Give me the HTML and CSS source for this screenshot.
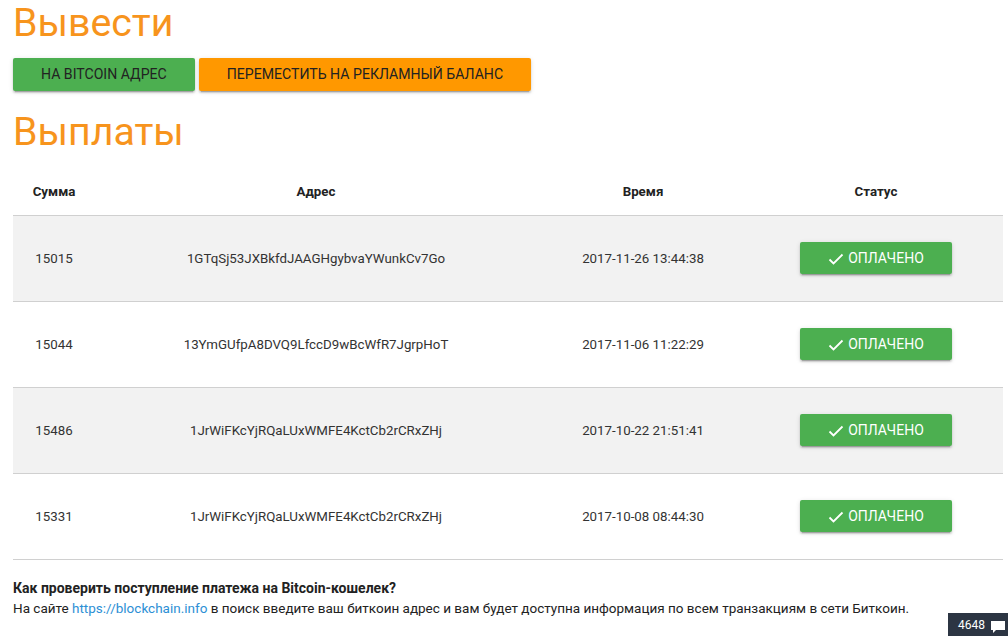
FILE: index.html
```html
<!DOCTYPE html>
<html lang="ru">
<head>
  <meta charset="UTF-8" />
  <meta name="viewport" content="width=device-width, initial-scale=1.0"/>
  <title>Вывести</title>
  <link rel="stylesheet" href="styles.css">
</head>
<body>
  <div class="wrapper">
    <h1 class="title">Вывести</h1>
    <div class="buttons">
      <a class="btn btn-green" href="#">На Bitcoin адрес</a>
      <a class="btn btn-orange" href="#">Переместить на рекламный баланс</a>
    </div>

    <h1 class="title title-payouts">Выплаты</h1>
    <table class="payouts">
      <colgroup>
        <col style="width: 82px">
        <col style="width: 442px">
        <col style="width: 212px">
        <col style="width: 254px">
      </colgroup>
      <thead>
        <tr>
          <th>Сумма</th>
          <th>Адрес</th>
          <th>Время</th>
          <th>Статус</th>
        </tr>
      </thead>
      <tbody>
        <tr>
          <td>15015</td>
          <td>1GTqSj53JXBkfdJAAGHgybvaYWunkCv7Go</td>
          <td>2017-11-26 13:44:38</td>
          <td><span class="status"><svg class="check" viewBox="0 0 16 12" width="16" height="12"><path d="M1.5 6.5l4 4 9-9" fill="none" stroke="#fff" stroke-width="1.8"/></svg>Оплачено</span></td>
        </tr>
        <tr>
          <td>15044</td>
          <td>13YmGUfpA8DVQ9LfccD9wBcWfR7JgrpHoT</td>
          <td>2017-11-06 11:22:29</td>
          <td><span class="status"><svg class="check" viewBox="0 0 16 12" width="16" height="12"><path d="M1.5 6.5l4 4 9-9" fill="none" stroke="#fff" stroke-width="1.8"/></svg>Оплачено</span></td>
        </tr>
        <tr>
          <td>15486</td>
          <td>1JrWiFKcYjRQaLUxWMFE4KctCb2rCRxZHj</td>
          <td>2017-10-22 21:51:41</td>
          <td><span class="status"><svg class="check" viewBox="0 0 16 12" width="16" height="12"><path d="M1.5 6.5l4 4 9-9" fill="none" stroke="#fff" stroke-width="1.8"/></svg>Оплачено</span></td>
        </tr>
        <tr>
          <td>15331</td>
          <td>1JrWiFKcYjRQaLUxWMFE4KctCb2rCRxZHj</td>
          <td>2017-10-08 08:44:30</td>
          <td><span class="status"><svg class="check" viewBox="0 0 16 12" width="16" height="12"><path d="M1.5 6.5l4 4 9-9" fill="none" stroke="#fff" stroke-width="1.8"/></svg>Оплачено</span></td>
        </tr>
      </tbody>
    </table>

    <div class="help">
      <p class="help-q">Как проверить поступление платежа на Bitcoin-кошелек?</p>
      <p>На сайте <a href="#">https://blockchain.info</a> в поиск введите ваш биткоин адрес и вам будет доступна информация по всем транзакциям в сети Биткоин.</p>
    </div>
  </div>

  <div class="chat-badge">4648
    <svg viewBox="0 0 16 14" width="16" height="14"><path d="M1 1h14v9H6l-3 3v-3H1z" fill="#fff"/></svg>
  </div>
</body>
</html>
```

FILE: styles.css
```css
* {
  margin: 0;
  padding: 0;
  box-sizing: border-box;
}

body {
  font-family: Roboto, "Liberation Sans", sans-serif;
  color: #333;
  background: #fff;
  overflow: hidden;
}

.wrapper {
  padding: 0 5px 0 13px;
}

.title {
  font-size: 39.3px;
  font-weight: 400;
  color: #f7941d;
  line-height: 46px;
}

.title-payouts {
  margin-top: 18px;
  margin-bottom: 14px;
}

.buttons {
  margin-top: 12px;
  display: flex;
  gap: 4px;
}

.btn {
  display: inline-block;
  height: 33px;
  line-height: 33px;
  padding: 0 28px;
  font-size: 14.1px;
  text-transform: uppercase;
  color: #222;
  text-decoration: none;
  border-radius: 2px;
  box-shadow: 0 2px 2px rgba(0, 0, 0, 0.14), 0 1px 5px rgba(0, 0, 0, 0.12), 0 3px 1px -2px rgba(0, 0, 0, 0.2);
}

.btn-green {
  background-color: #4caf50;
}

.btn-orange {
  background-color: #ff9800;
}

.payouts {
  width: 990px;
  border-collapse: collapse;
  table-layout: fixed;
}

.payouts th {
  height: 46px;
  font-size: 13.3px;
  font-weight: 700;
  color: #222;
  text-align: center;
  border-bottom: 1px solid #d0d0d0;
}

.payouts td {
  height: 86px;
  font-size: 13.3px;
  text-align: center;
  border-bottom: 1px solid #d0d0d0;
}

.payouts tbody tr:nth-child(odd) {
  background-color: #f2f2f2;
}

.status {
  display: inline-flex;
  align-items: center;
  justify-content: center;
  gap: 4px;
  width: 152px;
  height: 32px;
  background-color: #4caf50;
  color: #fff;
  font-size: 14px;
  text-transform: uppercase;
  border-radius: 2px;
  box-shadow: 0 2px 2px rgba(0, 0, 0, 0.14), 0 1px 5px rgba(0, 0, 0, 0.12), 0 3px 1px -2px rgba(0, 0, 0, 0.2);
}

.check {
  margin-top: 1px;
}

.help {
  margin-top: 18px;
  font-size: 13.5px;
  line-height: 20px;
  color: #222;
}

.help-q {
  font-size: 14px;
  font-weight: 700;
}

.help a {
  color: #2d8fd5;
  text-decoration: none;
}

.chat-badge {
  position: fixed;
  right: 0;
  bottom: 0;
  width: 60px;
  height: 23px;
  background-color: #2c3543;
  color: #fff;
  font-size: 12px;
  display: flex;
  align-items: center;
  justify-content: flex-end;
  gap: 5px;
  padding-right: 2px;
}

.chat-badge svg {
  margin-top: 4px;
}
```
